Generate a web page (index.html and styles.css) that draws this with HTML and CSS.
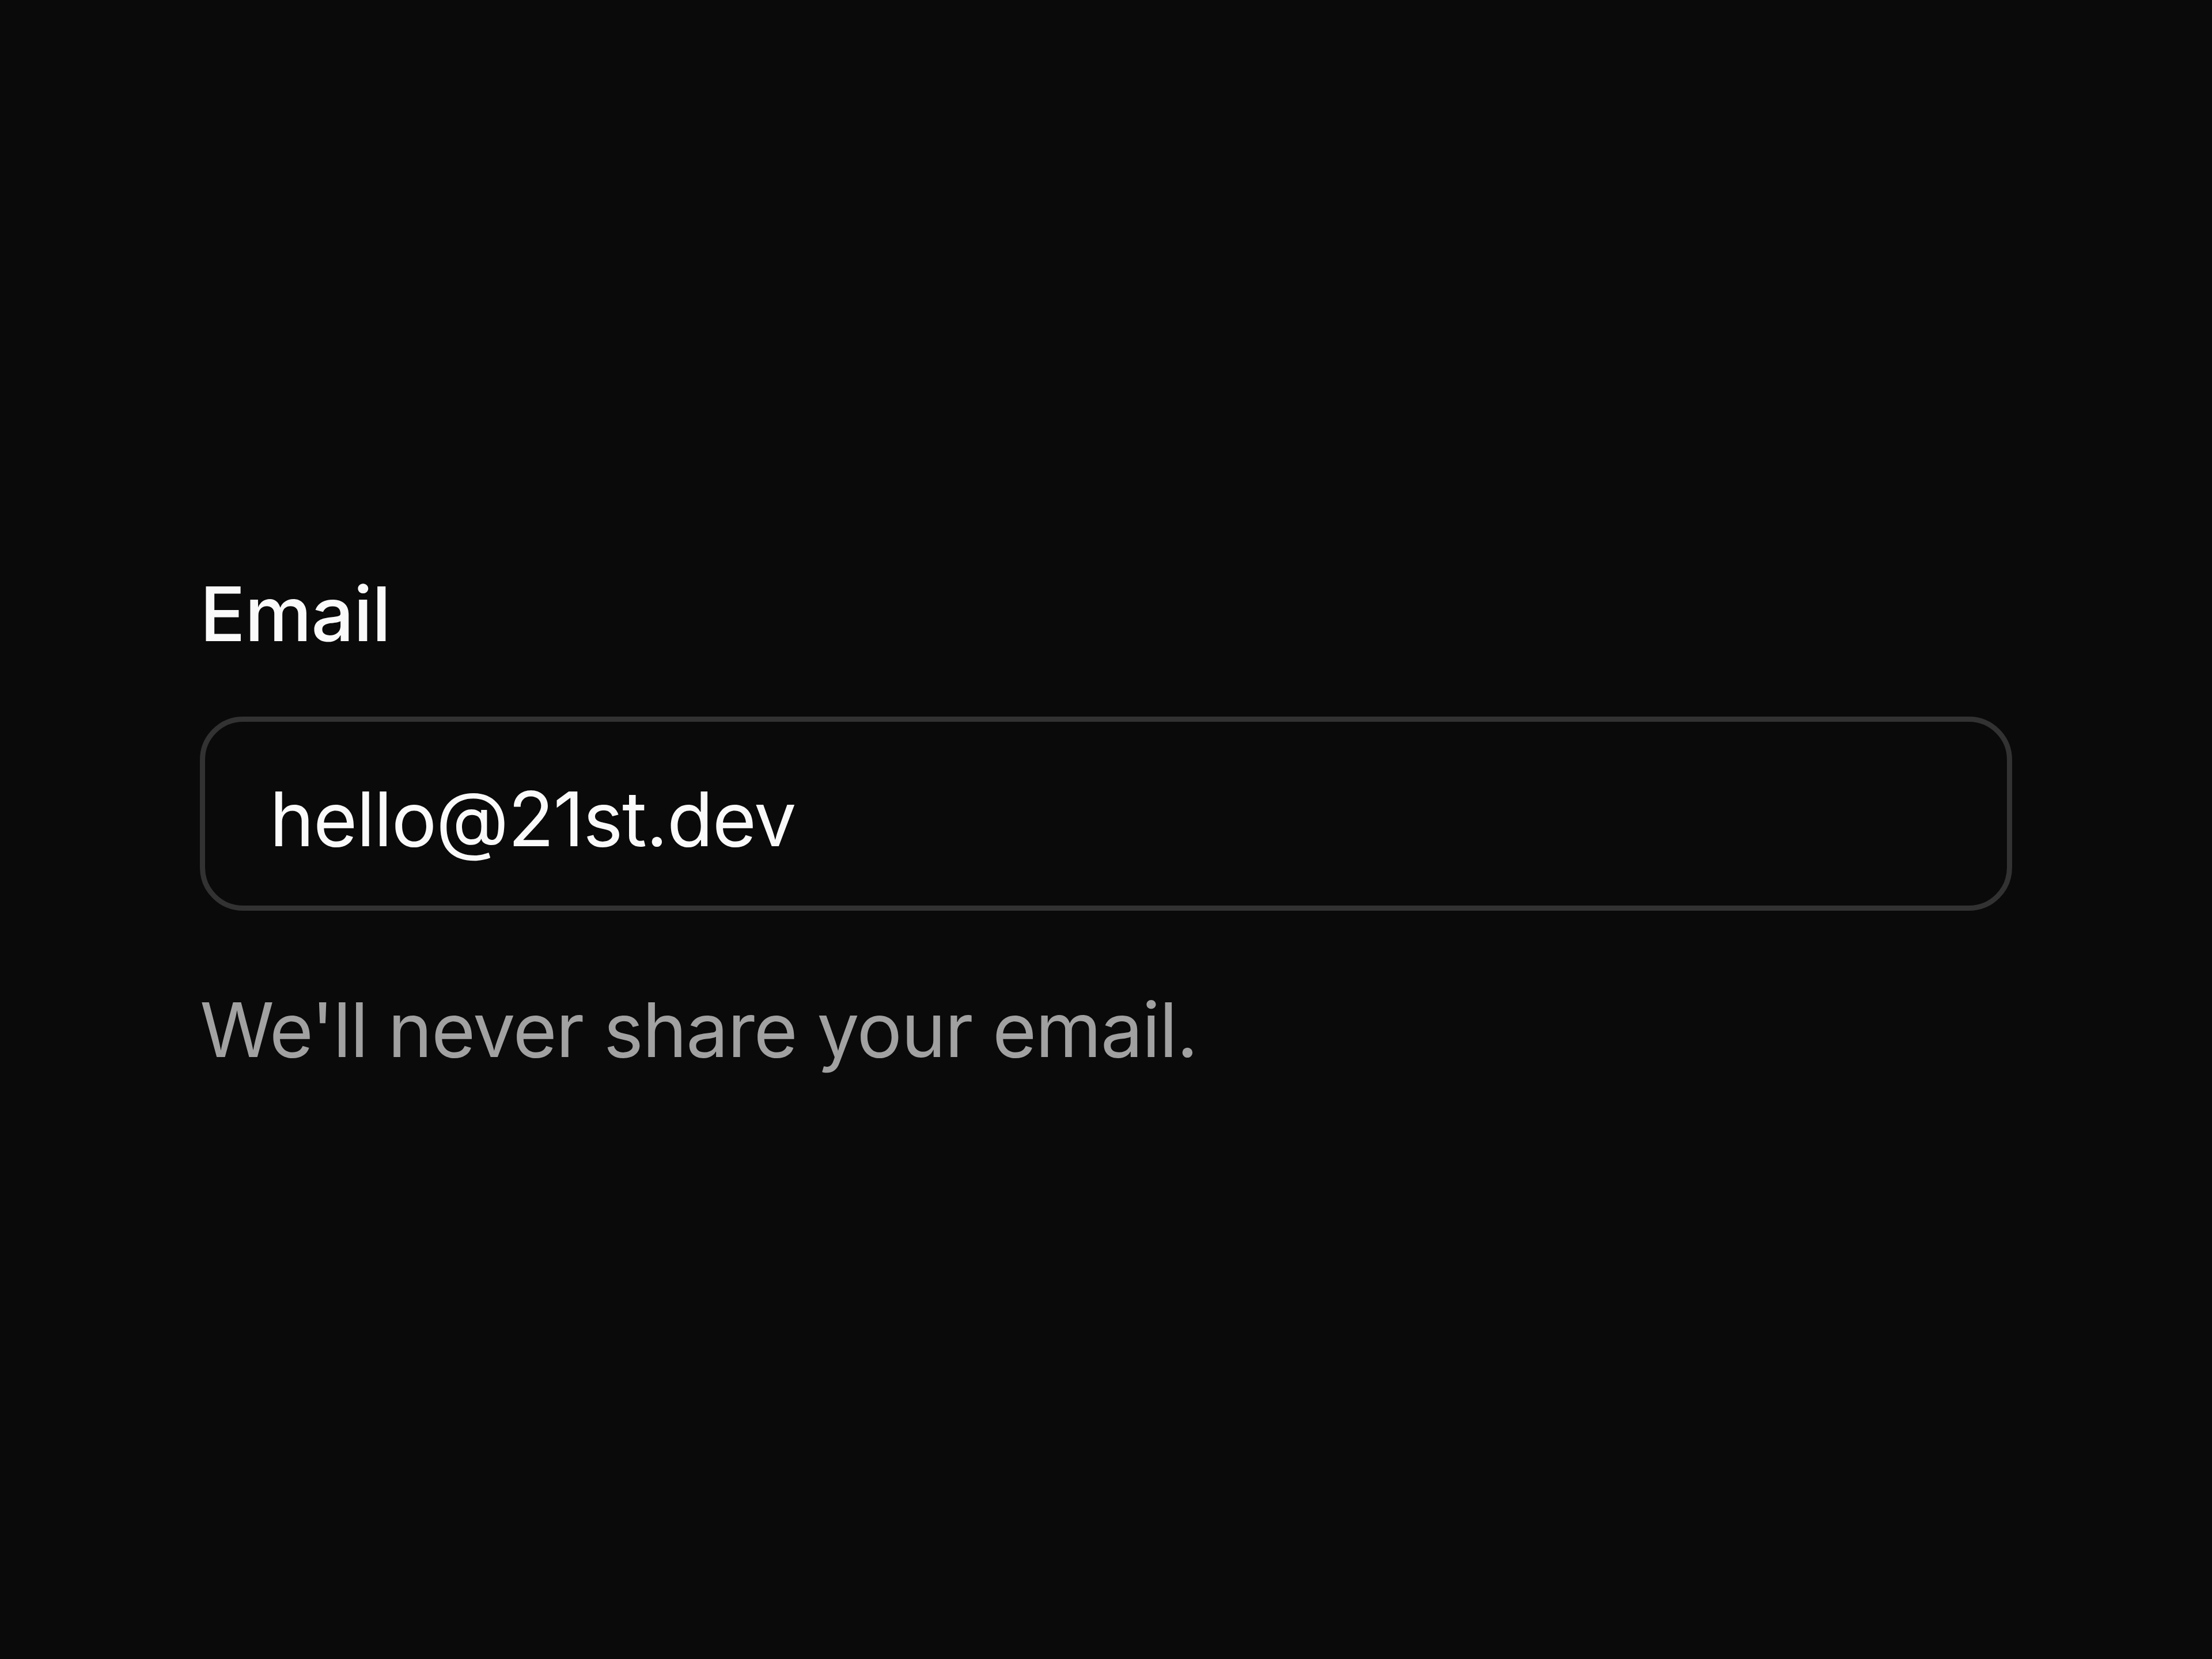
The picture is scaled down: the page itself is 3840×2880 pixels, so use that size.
FILE: index.html
```html
<!DOCTYPE html>
<html lang="en">
<head>
<meta charset="utf-8">
<title>Email field</title>
<link rel="stylesheet" href="styles.css">
</head>
<body>
<main class="page">
  <div class="field">
    <label class="label" for="email">Email</label>
    <input class="input" id="email" type="email" value="hello@21st.dev">
    <p class="hint">We'll never share your email.</p>
  </div>
</main>
</body>
</html>
```

FILE: styles.css
```css
html, body {
  margin: 0;
  padding: 0;
  background: #0a0a0a;
}

.page {
  width: 3840px;
  height: 2880px;
  display: flex;
  align-items: center;
  justify-content: center;
  font-family: Inter, "Noto Sans", sans-serif;
}

.field {
  width: 3146px;
  display: flex;
  flex-direction: column;
  gap: 113px;
}

.label {
  font-size: 131px;
  line-height: 131px;
  font-weight: 500;
  letter-spacing: -1px;
  color: #fafafa;
}

.input {
  box-sizing: border-box;
  width: 100%;
  height: 337px;
  margin: 0;
  padding: 18px 112px 0;
  border: 9.4px solid #323232;
  border-radius: 75px;
  background: #0a0a0a;
  color: #fafafa;
  font-family: Inter, "Noto Sans", sans-serif;
  font-size: 131px;
  letter-spacing: -1.4px;
  outline: none;
}

.hint {
  margin: 0;
  font-size: 131px;
  line-height: 187px;
  letter-spacing: -1.7px;
  color: #a1a1a1;
}
```
